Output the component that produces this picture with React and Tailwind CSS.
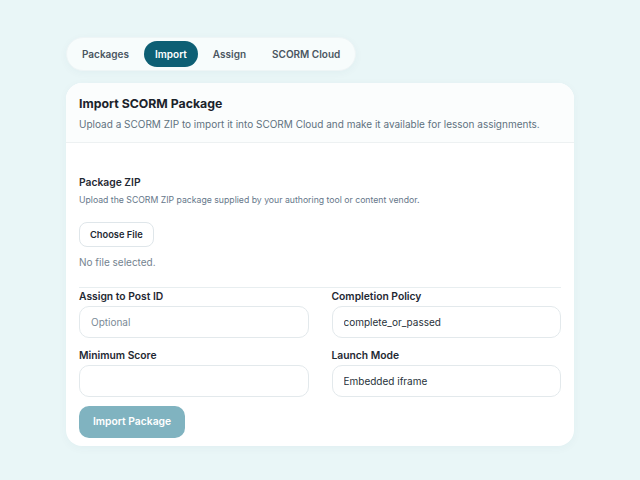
import React, { useState } from 'react';

const tabs = ['Packages', 'Import', 'Assign', 'SCORM Cloud'];

function Field({ label, placeholder, value }) {
  return (
    <div className="flex flex-col">
      <label className="text-[10.3px] font-semibold text-[#1f2933] mb-[3px] leading-[14px]">{label}</label>
      <input
        type="text"
        readOnly
        placeholder={placeholder}
        defaultValue={value}
        className="h-[32px] w-full rounded-[10px] border border-[#e3e9ec] bg-white px-[11px] text-[10px] text-[#27313a] placeholder:text-[#7b8a96] outline-none"
      />
    </div>
  );
}

export default function App() {
  const [tab, setTab] = useState('Import');

  return (
    <div className="min-h-[480px] w-[640px] bg-[#e9f6f7] pt-[37px] px-[66px]" style={{ fontFamily: 'Inter, "Noto Sans", sans-serif' }}>
      <div className="inline-flex items-center gap-[4px] rounded-full bg-[#f7fcfc] border border-[#eef5f6] px-[4px] py-[3px] shadow-[0_2px_8px_rgba(20,80,90,0.04)]">
        {tabs.map((t) => (
          <button
            key={t}
            onClick={() => setTab(t)}
            className={`h-[26px] rounded-full px-[11px] text-[10px] font-semibold ${
              tab === t ? 'bg-[#0d5f74] text-white' : 'text-[#4a5661]'
            }`}
          >
            {t}
          </button>
        ))}
      </div>

      <div className="mt-[12px] w-[508px] rounded-[16px] bg-white shadow-[0_2px_10px_rgba(20,80,90,0.04)] overflow-hidden">
        <div className="border-b border-[#edf1f2] bg-[#fbfdfd] px-[13px] pt-[12px] pb-[11px]">
          <h2 className="text-[12.3px] font-bold text-[#1b232b] leading-[18px]">Import SCORM Package</h2>
          <p className="mt-[4px] text-[10px] text-[#5f7280] leading-[14px]">
            Upload a SCORM ZIP to import it into SCORM Cloud and make it available for lesson assignments.
          </p>
        </div>

        <div className="px-[13px] pt-[32px] pb-[8px]">
          <div className="text-[10.3px] font-semibold text-[#1f2933] leading-[14px]">Package ZIP</div>
          <p className="mt-[5px] text-[8.7px] text-[#66778a] leading-[12px]">
            Upload the SCORM ZIP package supplied by your authoring tool or content vendor.
          </p>
          <button className="mt-[16px] h-[25px] rounded-[8px] border border-[#dfe6ea] bg-white px-[10px] text-[9.3px] font-semibold text-[#1f2933]">
            Choose File
          </button>
          <div className="mt-[8px] text-[10px] text-[#748390] leading-[14px]">No file selected.</div>

          <div className="mt-[18px] border-t border-[#e8eef0] pt-[1px] grid grid-cols-2 gap-x-[23px] gap-y-[10px]">
            <Field label="Assign to Post ID" placeholder="Optional" />
            <Field label="Completion Policy" value="complete_or_passed" />
            <Field label="Minimum Score" />
            <Field label="Launch Mode" value="Embedded iframe" />
          </div>

          <button disabled className="mt-[9px] h-[32px] rounded-[10px] bg-[#80b3c0] px-[14px] text-[10.3px] font-semibold text-white">
            Import Package
          </button>
        </div>
      </div>
    </div>
  );
}
